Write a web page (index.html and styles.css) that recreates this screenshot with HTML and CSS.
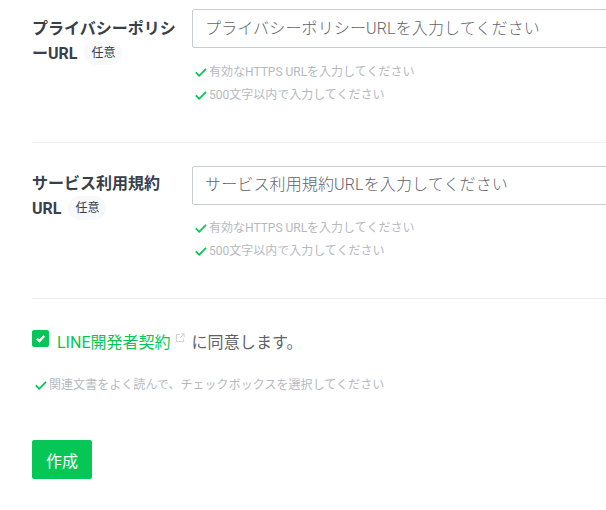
FILE: index.html
```html
<!DOCTYPE html>
<html lang="ja">
<head>
    <meta charset="utf-8">
    <link rel="stylesheet" href="styles.css">
    <title>作成</title>
</head>
<body>
    <form class="page">
        <div class="field">
            <div class="field-label">プライバシーポリシ<br>ーURL<span class="badge">任意</span></div>
            <div class="field-body">
                <input class="text-input" placeholder="プライバシーポリシーURLを入力してください">
                <ul class="hints">
                    <li><svg class="check" viewBox="0 0 12 10"><path d="M.8 4.4 4.2 7.8 11 .8"/></svg>有効なHTTPS URLを入力してください</li>
                    <li><svg class="check" viewBox="0 0 12 10"><path d="M.8 4.4 4.2 7.8 11 .8"/></svg>500文字以内で入力してください</li>
                </ul>
            </div>
        </div>
        <div class="field field-second">
            <div class="field-label">サービス利用規約<br>URL<span class="badge">任意</span></div>
            <div class="field-body">
                <input class="text-input" placeholder="サービス利用規約URLを入力してください">
                <ul class="hints">
                    <li><svg class="check" viewBox="0 0 12 10"><path d="M.8 4.4 4.2 7.8 11 .8"/></svg>有効なHTTPS URLを入力してください</li>
                    <li><svg class="check" viewBox="0 0 12 10"><path d="M.8 4.4 4.2 7.8 11 .8"/></svg>500文字以内で入力してください</li>
                </ul>
            </div>
        </div>
        <div class="agree">
            <span class="checkbox"><svg viewBox="0 0 17 17"><path d="M4.8 8.6 7.4 11 12.2 6"/></svg></span>
            <a class="link" href="#">LINE開発者契約</a>
            <svg class="external" viewBox="0 0 11 11"><path d="M5 1.5H1.5V9.5H9.5V6M6.5 1H10V4.5M10 1 5.5 5.5"/></svg>
            <span class="agree-text">に同意します。</span>
        </div>
        <ul class="hints agree-hints">
            <li><svg class="check" viewBox="0 0 12 10"><path d="M.8 4.4 4.2 7.8 11 .8"/></svg>関連文書をよく読んで、チェックボックスを選択してください</li>
        </ul>
        <button class="submit" type="button">作成</button>
    </form>
</body>
</html>
```

FILE: styles.css
```css
html, body {
    margin: 0;
    height: 510px;
    overflow: hidden;
    background: #fff;
}

body {
    font-family: Roboto, "Noto Sans CJK JP", sans-serif;
    color: #3a4049;
}

.page {
    padding: 9px 0 0 32px;
}

.field {
    display: flex;
    height: 133px;
    margin-bottom: 23px;
    border-bottom: 1px solid #edeff1;
}

.field-label {
    flex: none;
    width: 146px;
    margin-right: 14px;
    padding-top: 7px;
    font-size: 16px;
    font-weight: 700;
    line-height: 25px;
}

.badge {
    display: inline-block;
    margin-left: 7px;
    padding: 0 7px;
    border-radius: 12px;
    background: #f7f8fa;
    font-size: 12px;
    font-weight: 400;
    line-height: 24px;
    vertical-align: top;
}

.field-body {
    flex: 1;
}

.text-input {
    display: block;
    box-sizing: border-box;
    width: 440px;
    height: 39px;
    padding: 0 12px;
    border: 1px solid #c8ccd3;
    border-radius: 2px;
    outline: none;
    font: 300 16px Roboto, "Noto Sans CJK JP", sans-serif;
    letter-spacing: .14px;
}

.text-input::placeholder {
    color: #5f646c;
}

.hints {
    margin: 13px 0 0 3px;
    padding: 0;
    list-style: none;
    font-size: 12px;
    line-height: 23px;
    color: #b5bac2;
}

.hints li {
    display: flex;
    align-items: center;
}

.check {
    width: 12px;
    height: 10px;
    margin-right: 2px;
    fill: none;
    stroke: #06c755;
    stroke-width: 1.8;
}

/* second row sits a pixel tighter than the first */
.field-second {
    height: 132px;
}

.field-second .field-label {
    padding-top: 5px;
}

.field-second .text-input {
    padding-bottom: 2px;
}

.field-second .hints {
    margin-top: 12px;
}

.agree {
    display: flex;
    align-items: center;
    height: 22px;
    margin-top: 31px;
    font-size: 16px;
}

.checkbox {
    display: block;
    width: 17px;
    height: 17px;
    margin: -6px 9px 0 0;
    border-radius: 2px;
    background: #06c755;
}

.checkbox svg {
    display: block;
    fill: none;
    stroke: #fff;
    stroke-width: 2.4;
}

.link {
    margin-left: -1px;
    color: #06c755;
    text-decoration: none;
}

.external {
    width: 10px;
    height: 10px;
    margin: -6px 6px 0 5px;
    fill: none;
    stroke: #c6cad0;
}

.agree-text {
    color: #5c626b;
    letter-spacing: .1px;
}

.agree-hints {
    margin: 22px 0 0 3px;
    letter-spacing: .05px;
}

.submit {
    display: block;
    width: 60px;
    height: 39px;
    margin-top: 43px;
    padding: 0;
    border: 0;
    border-radius: 2px;
    background: #06c755;
    color: #fff;
    font: 400 16px Roboto, "Noto Sans CJK JP", sans-serif;
}
```
